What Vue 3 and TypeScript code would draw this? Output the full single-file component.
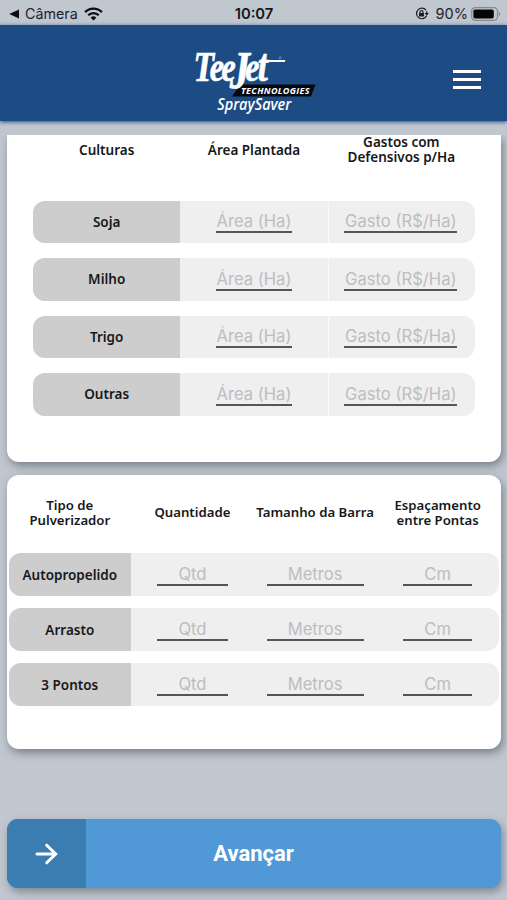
<script setup lang="ts">
import { ref } from 'vue'

interface Crop {
  name: string
  area: string
  cost: string
}

interface Sprayer {
  name: string
  quantity: string
  boom: string
  spacing: string
}

const crops = ref<Crop[]>(
  ['Soja', 'Milho', 'Trigo', 'Outras'].map((name) => ({ name, area: '', cost: '' })),
)

const sprayers = ref<Sprayer[]>(
  ['Autopropelido', 'Arrasto', '3 Pontos'].map((name) => ({
    name,
    quantity: '',
    boom: '',
    spacing: '',
  })),
)
</script>

<template>
  <div class="screen">
    <div class="status">
      <div class="status-side">
        <svg class="back" width="11" height="10" viewBox="0 0 11 10"><path d="M0.3 5 10 0.6v8.8z" fill="#0b0d10" /></svg>
        <span class="carrier">Câmera</span>
        <svg class="wifi" width="19" height="14" viewBox="0 0 19 14" fill="none" stroke="#0b0d10" stroke-width="2.3">
          <path d="M1.1 5.1a11.9 11.9 0 0 1 16.8 0" />
          <path d="M4.2 8.3a7.5 7.5 0 0 1 10.6 0" />
          <path d="M9.5 13.6 6.6 10.7a4.1 4.1 0 0 1 5.8 0z" fill="#0b0d10" stroke="none" />
        </svg>
      </div>
      <span class="clock">10:07</span>
      <div class="status-side right">
        <svg class="lock" width="14" height="13" viewBox="0 0 14 13" fill="none" stroke="#1b1d21" stroke-width="1.2">
          <path d="M11 3.1A5.3 5.3 0 1 0 11.6 8.8" />
          <path d="M11.7 4.2v3.2" />
          <path d="M9.6 6.1h4.2l-2.1 2.7z" fill="#1b1d21" stroke="none" />
          <rect x="4" y="6" width="5" height="3.5" rx=".5" fill="#1b1d21" stroke="none" />
          <path d="M5 6.2V5a1.5 1.5 0 0 1 3 0v1.2" />
        </svg>
        <span class="percent">90%</span>
        <svg class="battery" width="30" height="14" viewBox="0 0 30 14">
          <rect x=".7" y=".7" width="25.8" height="12.6" rx="3.6" fill="none" stroke="#85898f" stroke-width="1.2" />
          <rect x="2.4" y="2.4" width="20.4" height="9.2" rx="1.8" fill="#050607" />
          <path d="M27.8 4.8c2 .8 2 3.6 0 4.4z" fill="#85898f" />
        </svg>
      </div>
    </div>

    <header class="header">
      <svg class="logo" width="124" height="64" viewBox="0 0 124 64">
        <path d="M47 36.5h75.5l-4.5 12H39z" fill="#05080f" />
        <text class="wordmark" transform="scale(.78 1)">
          <tspan x="0.5" y="33" font-size="43">T</tspan><tspan x="21.5 36.500" font-size="41">ee</tspan><tspan x="47" y="39.500" font-size="52">J</tspan><tspan x="67" y="33" font-size="41">e</tspan><tspan x="83" y="33" font-size="46">t</tspan>
        </text>
        <path d="M74 12h18.300l-.4 2H73.600z" fill="#fff" />
        <circle cx="87.200" cy="9.800" r="1" fill="none" stroke="#8fadd0" stroke-width=".6" />
        <text class="technologies" x="48" y="45.700" textLength="68.500" lengthAdjust="spacing">TECHNOLOGIES</text>
        <text class="product" x="24.200" y="62" textLength="74" lengthAdjust="spacingAndGlyphs">SpraySaver</text>
      </svg>
      <button class="menu" aria-label="Menu"><i></i><i></i><i></i></button>
    </header>

    <main class="content">
      <section class="card crops">
        <div class="heads">
          <span>Culturas</span>
          <span>Área Plantada</span>
          <span>Gastos com<br />Defensivos p/Ha</span>
        </div>
        <div v-for="crop in crops" :key="crop.name" class="row">
          <div class="name">{{ crop.name }}</div>
          <div class="cell"><input v-model="crop.area" class="area" placeholder="Área (Ha)" /></div>
          <div class="cell"><input v-model="crop.cost" class="cost" placeholder="Gasto (R$/Ha)" /></div>
        </div>
      </section>

      <section class="card sprayers">
        <div class="heads">
          <span>Tipo de<br />Pulverizador</span>
          <span>Quantidade</span>
          <span>Tamanho da Barra</span>
          <span>Espaçamento<br />entre Pontas</span>
        </div>
        <div v-for="sprayer in sprayers" :key="sprayer.name" class="row">
          <div class="name">{{ sprayer.name }}</div>
          <div class="cell"><input v-model="sprayer.quantity" class="quantity" placeholder="Qtd" /></div>
          <div class="cell"><input v-model="sprayer.boom" class="boom" placeholder="Metros" /></div>
          <div class="cell"><input v-model="sprayer.spacing" class="spacing" placeholder="Cm" /></div>
        </div>
      </section>

      <button class="next">
        <span class="next-icon">
          <svg width="24" height="22" viewBox="0 0 24 22" fill="none" stroke="#fff" stroke-width="3" stroke-linecap="round">
            <path d="M2 11h18M11.7 2.2l9 8.8-9 8.8" />
          </svg>
        </span>
        <span class="next-label">Avançar</span>
      </button>
    </main>
  </div>
</template>

<style>
body {
  background: #c1c7cf;
}
</style>

<style scoped>
.screen {
  display: flex;
  flex-direction: column;
  width: 507px;
  height: 900px;
  overflow: hidden;
  background: #c1c7cf;
  font-family: 'Noto Sans', sans-serif;
}

.screen * {
  box-sizing: border-box;
}

.status {
  display: grid;
  grid-template-columns: 1fr auto 1fr;
  align-items: center;
  height: 25px;
  padding: 2px 6px 0 9px;
  font-family: Inter, sans-serif;
  font-size: 14.5px;
  color: #202328;
}

.status-side {
  display: flex;
  align-items: center;
}

.status-side.right {
  justify-content: flex-end;
}

.carrier {
  margin: 0 6px 0 5px;
  font-size: 14.3px;
}

.clock {
  padding-right: 2px;
  font-weight: 600;
  font-size: 14.8px;
  color: #15171a;
}

.percent {
  margin: 0 3px 0 7px;
}

.header {
  display: flex;
  position: relative;
  z-index: 1;
  flex: none;
  justify-content: space-between;
  height: 96px;
  padding: 23px 26px 0 193px;
  background: #1d4c85;
  box-shadow: 0 1px 4px #1d4c85;
}

.logo {
  overflow: visible;
  fill: #fff;
}

.wordmark {
  font-family: 'Liberation Serif', serif;
  font-style: italic;
  font-weight: 700;
  stroke: #fff;
  stroke-width: 0.7px;
}

.technologies {
  font-family: 'Open Sans', sans-serif;
  font-size: 9px;
  font-style: italic;
  font-weight: 700;
}

.product {
  font-family: 'Open Sans', sans-serif;
  font-size: 15.5px;
  font-style: italic;
  font-weight: 600;
}

.menu {
  display: flex;
  flex-direction: column;
  gap: 5px;
  width: 28px;
  margin-top: 22px;
  padding: 0;
  border: 0;
  background: none;
}

.menu i {
  height: 3px;
  background: #fff;
}

.content {
  display: flex;
  flex-direction: column;
  flex: 1;
  margin-top: 14px;
  padding: 0 6px 0 7px;
  overflow: hidden;
}

.card {
  flex: none;
  background: #fff;
  border-radius: 12px;
  box-shadow: 2px 4px 8px rgb(50 60 72 / 50%);
}

.crops {
  height: 327px;
  padding: 0 26px;
  border-radius: 0 0 12px 12px;
}

.sprayers {
  height: 274px;
  margin-top: 13px;
  padding: 0 2px 0 1.5px;
}

.heads,
.row {
  display: grid;
  grid-auto-flow: column;
  grid-auto-columns: minmax(0, 1fr);
}

.heads {
  align-items: center;
  font-size: 13.5px;
  font-weight: 600;
  line-height: 15px;
  text-align: center;
  white-space: nowrap;
  color: #17181a;
}

.crops .heads {
  height: 27px;
  margin-bottom: 38.5px;
}

.sprayers .heads {
  height: 75px;
  margin-bottom: 3px;
  font-size: 13.2px;
}

.row {
  height: 42.5px;
  overflow: hidden;
  background: #efefef;
  border-radius: 12px;
}

.crops .row {
  margin-bottom: 15px;
}

.sprayers .row {
  margin-bottom: 12.5px;
}

.name {
  display: flex;
  align-items: center;
  justify-content: center;
  background: #cdcdcd;
  font-size: 13.5px;
  font-weight: 600;
  color: #17181a;
}

.sprayers .name {
  padding-top: 1px;
}

.cell {
  display: flex;
  justify-content: center;
  align-items: flex-start;
  padding-top: 9px;
}

.crops .cell + .cell {
  padding-right: 1px;
  box-shadow: inset 1px 0 #f9f9f9;
}

input {
  height: 23.5px;
  padding: 2px 0 0;
  border: 0;
  border-bottom: 2px solid #555;
  border-radius: 0;
  outline: 0;
  background: none;
  font-family: Inter, sans-serif;
  font-size: 16.6px;
  text-align: center;
  color: #333;
}

input::placeholder {
  color: #bdbdbf;
  opacity: 1;
}

.area {
  width: 76px;
}

.cost {
  width: 113px;
}

.quantity {
  width: 71px;
}

.boom {
  width: 97px;
}

.spacing {
  width: 69px;
}

.next {
  display: flex;
  flex: none;
  height: 69px;
  margin-top: 70px;
  padding: 0;
  overflow: hidden;
  border: 0;
  border-radius: 11px;
  background: #5099d6;
  box-shadow: 2px 4px 8px rgb(50 60 72 / 45%);
  color: #fff;
}

.next-icon {
  display: flex;
  align-items: center;
  justify-content: center;
  width: 79px;
  height: 100%;
  background: #3c7db1;
}

.next-label {
  flex: 1;
  align-self: center;
  padding-right: 80px;
  font-family: Roboto, sans-serif;
  font-size: 22px;
  font-weight: 700;
  text-align: center;
}
</style>
